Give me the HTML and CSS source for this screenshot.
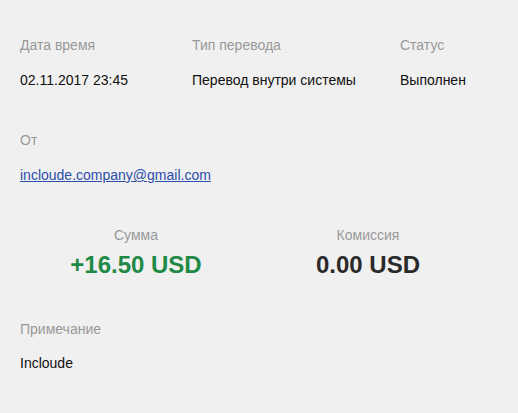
FILE: index.html
```html
<!DOCTYPE html>
<html lang="ru">
<head>
<meta charset="utf-8">
<link rel="stylesheet" href="styles.css">
</head>
<body>
<div class="page">
  <div class="row3">
    <div class="field">
      <div class="label">Дата время</div>
      <div class="value">02.11.2017 23:45</div>
    </div>
    <div class="field">
      <div class="label">Тип перевода</div>
      <div class="value">Перевод внутри системы</div>
    </div>
    <div class="field">
      <div class="label">Статус</div>
      <div class="value">Выполнен</div>
    </div>
  </div>
  <div class="field block">
    <div class="label">От</div>
    <div class="value"><a class="link" href="#">incloude.company@gmail.com</a></div>
  </div>
  <div class="amounts">
    <div class="amount">
      <div class="label">Сумма</div>
      <div class="sum plus">+16.50 USD</div>
    </div>
    <div class="amount">
      <div class="label">Комиссия</div>
      <div class="sum">0.00 USD</div>
    </div>
  </div>
  <div class="field note">
    <div class="label">Примечание</div>
    <div class="value tight">Incloude</div>
  </div>
</div>
</body>
</html>
```
FILE: styles.css
```css
html, body {
  margin: 0;
  padding: 0;
  background: #f0f0f0;
}
body {
  font-family: "Liberation Sans", Arial, sans-serif;
  font-size: 14px;
  color: #111;
}
.page {
  width: 464px;
  padding: 37px 0 0 20px;
}
.row3 {
  display: grid;
  grid-template-columns: 172px 208px 1fr;
}
.label {
  color: #999;
  line-height: 16px;
}
.value {
  margin-top: 19px;
  line-height: 16px;
}
.value.tight {
  margin-top: 18px;
}
.block {
  margin-top: 44px;
}
.note {
  margin-top: 42px;
}
.link {
  color: #2b4fa8;
  text-decoration: underline;
}
.amounts {
  display: grid;
  grid-template-columns: 1fr 1fr;
  margin-top: 44px;
  text-align: center;
}
.sum {
  font-size: 24px;
  font-weight: bold;
  line-height: 28px;
  margin-top: 8px;
  color: #2a2a2a;
}
.sum.plus {
  color: #1f8a45;
}
```
